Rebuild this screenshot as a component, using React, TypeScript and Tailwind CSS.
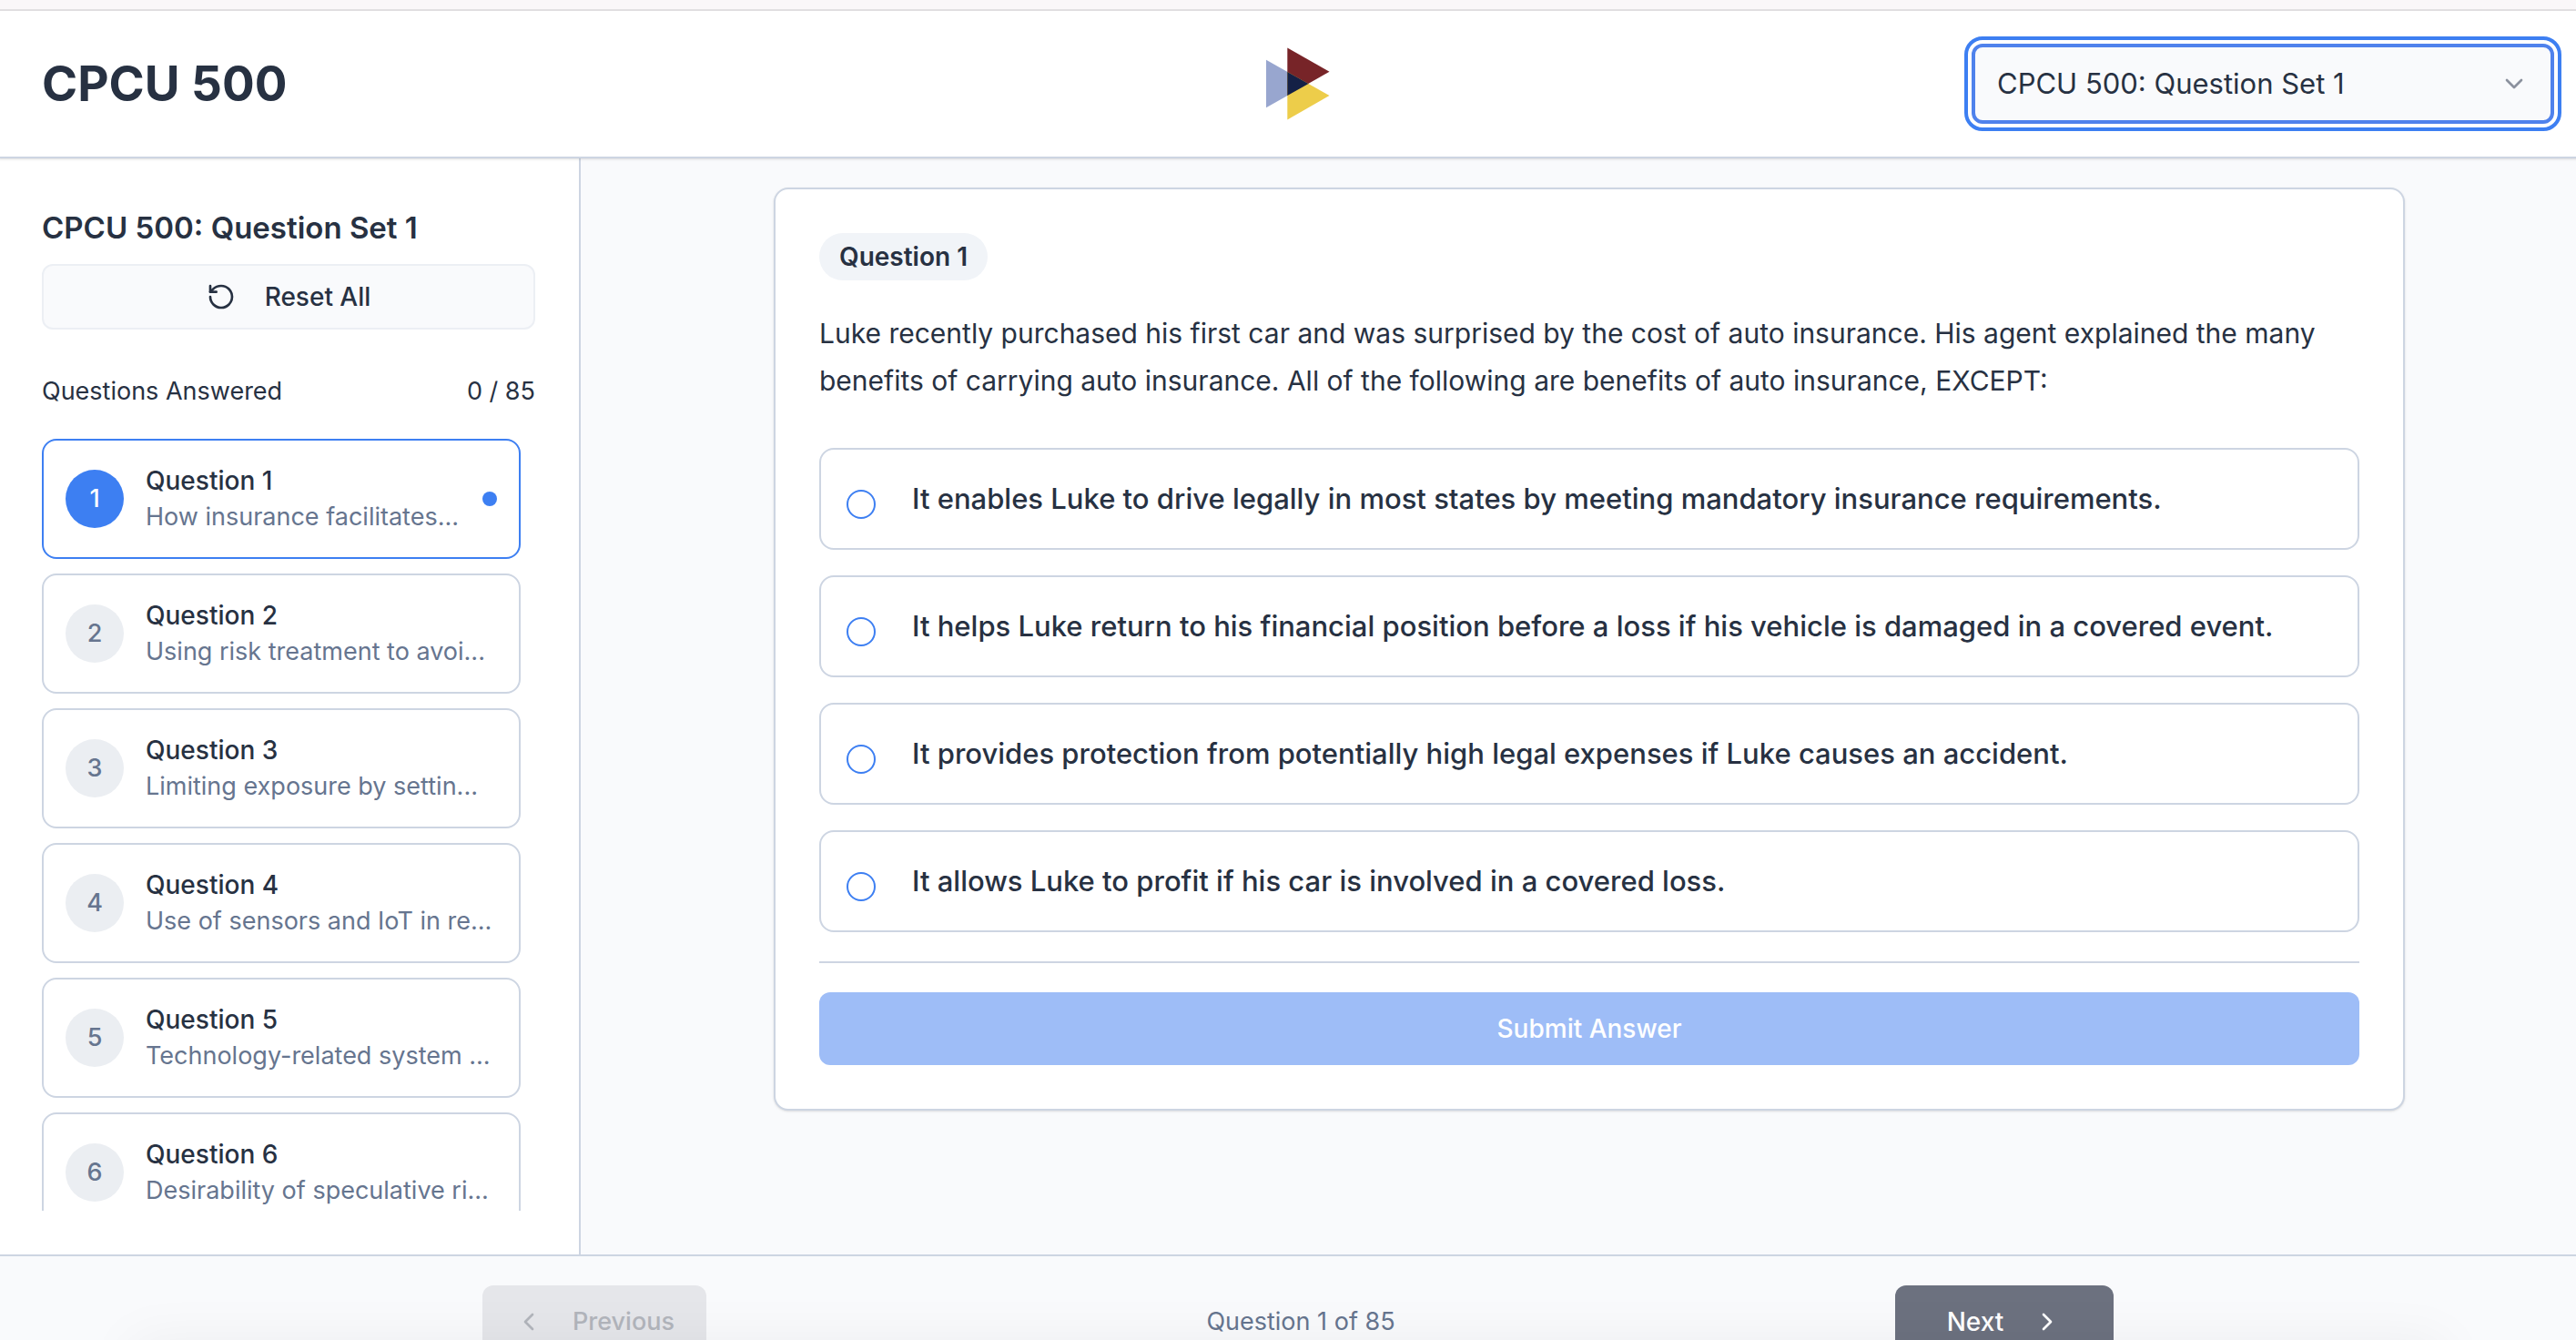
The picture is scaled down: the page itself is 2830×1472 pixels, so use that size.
import React, { useState } from "react";
import { ChevronDown, ChevronLeft, ChevronRight, RotateCcw } from "lucide-react";

const questions = [
  "How insurance facilitates...",
  "Using risk treatment to avoi...",
  "Limiting exposure by settin...",
  "Use of sensors and IoT in re...",
  "Technology-related system ...",
  "Desirability of speculative ri...",
];

const answers = [
  "It enables Luke to drive legally in most states by meeting mandatory insurance requirements.",
  "It helps Luke return to his financial position before a loss if his vehicle is damaged in a covered event.",
  "It provides protection from potentially high legal expenses if Luke causes an accident.",
  "It allows Luke to profit if his car is involved in a covered loss.",
];

function Logo() {
  return (
    <svg width="70" height="80" viewBox="0 0 70 80" role="img" aria-label="Logo">
      <path d="M0 13.7 46.5 40 0 66.3Z" fill="#98a6cf" />
      <path d="M23.3 0.5 69.5 26.7 23.3 53Z" fill="#772428" />
      <path d="M23.3 27 69.5 53 23.3 79.5Z" fill="#edcd4a" />
      <path d="M23.3 27 46.5 40 23.3 53Z" fill="#142046" />
    </svg>
  );
}

function Header() {
  return (
    <header className="z-10 flex h-[162px] shrink-0 items-center border-b-2 border-[#cdd5e2] bg-white px-12 shadow-sm">
      <h1 className="flex-1 text-[53px] leading-[64px] font-bold">CPCU 500</h1>
      <Logo />
      <div className="flex flex-1 justify-end">
        <div className="relative w-[640px]">
          <select
            aria-label="Question set"
            className="h-[88px] w-full appearance-none rounded-[12px] border-4 border-[#4f82ec] bg-[#f9fafc] px-6 text-[31px] outline-4 outline-offset-4 outline-[#3d7ff2]"
          >
            <option>CPCU 500: Question Set 1</option>
          </select>
          <ChevronDown className="pointer-events-none absolute top-7 right-7 size-8 text-[#8b919e]" />
        </div>
      </div>
    </header>
  );
}

function Sidebar({ current, onSelect }: { current: number; onSelect: (i: number) => void }) {
  return (
    <aside className="flex w-[640px] shrink-0 flex-col border-r-2 border-[#cdd5e2] bg-white p-12">
      <h2 className="pt-1 text-[33px] leading-[48px] font-semibold">CPCU 500: Question Set 1</h2>
      <button className="mt-4 flex h-[72px] shrink-0 items-center justify-center gap-8 rounded-[12px] border-2 border-[#eceff4] bg-[#f9fafc] text-[28px] font-medium">
        <RotateCcw className="size-8" />
        Reset All
      </button>
      <div className="mt-12 flex justify-between text-[27px] leading-10">
        <span>Questions Answered</span>
        <span>0 / 85</span>
      </div>
      <ul className="mt-8 flex min-h-0 flex-1 flex-col gap-4 overflow-hidden pr-4">
        {questions.map((topic, i) => (
          <li key={topic} className="shrink-0">
            <button
              onClick={() => onSelect(i)}
              className={`flex h-[132px] w-full items-center gap-6 rounded-[16px] border-2 px-6 text-left text-[27px] leading-10 ${
                i === current ? "border-[#3d7ff2]" : "border-[#cdd5e2]"
              }`}
            >
              <span
                className={`flex size-16 shrink-0 items-center justify-center rounded-full font-medium ${
                  i === current ? "bg-[#3d7ff2] text-white" : "bg-[#ebeef2] text-[#66758f]"
                }`}
              >
                {i + 1}
              </span>
              <span className="min-w-0 flex-1 whitespace-nowrap">
                <span className="block text-[28px] leading-10 font-medium">Question {i + 1}</span>
                <span className="block text-[#66758f]">{topic}</span>
              </span>
              {i === current && <span className="size-4 shrink-0 rounded-full bg-[#3d7ff2]" />}
            </button>
          </li>
        ))}
      </ul>
    </aside>
  );
}

function QuestionCard({ number }: { number: number }) {
  return (
    <section className="mx-auto w-full max-w-[1792px] rounded-[16px] border-2 border-[#cdd5e2] bg-white p-12 shadow-sm">
      <span className="inline-flex h-[52px] items-center rounded-full bg-[#f1f4f8] px-[22px] align-top text-[28px] font-semibold">
        Question {number}
      </span>
      <p className="mt-8 text-[30px] leading-[52px]">
        Luke recently purchased his first car and was surprised by the cost of auto insurance. His agent explained the
        many benefits of carrying auto insurance. All of the following are benefits of auto insurance, EXCEPT:
      </p>
      <div role="radiogroup" aria-label="Answers" className="mt-12 flex flex-col gap-7">
        {answers.map((answer) => (
          <label
            key={answer}
            className="flex h-[112px] items-center gap-10 rounded-[16px] border-2 border-[#cdd5e2] px-7 text-[31px] font-medium"
          >
            <input
              type="radio"
              name="answer"
              className="mt-3 size-8 shrink-0 appearance-none rounded-full border-2 border-[#3d7ff2] checked:border-[10px]"
            />
            {answer}
          </label>
        ))}
      </div>
      <hr className="my-8 border-t-2 border-[#cdd5e2]" />
      <button disabled className="h-20 w-full rounded-[12px] bg-[#9ebdf7] text-[28px] font-medium text-white">
        Submit Answer
      </button>
    </section>
  );
}

function Footer({ current, onSelect }: { current: number; onSelect: (i: number) => void }) {
  return (
    <footer className="shrink-0 border-t-2 border-[#cdd5e2] py-8 text-[27px]">
      <div className="mx-auto flex max-w-[1792px] items-center justify-between">
        <button
          disabled={current === 0}
          onClick={() => onSelect(current - 1)}
          className="flex h-20 w-[246px] items-center justify-center gap-8 rounded-[12px] bg-[#e5e6ea] font-medium text-[#b2b5bc]"
        >
          <ChevronLeft className="size-8" />
          Previous
        </button>
        <span className="text-[#66758f]">Question {current + 1} of 85</span>
        <button
          onClick={() => onSelect(Math.min(current + 1, questions.length - 1))}
          className="flex h-20 w-[240px] items-center justify-center gap-8 rounded-[12px] bg-[#6c717f] text-[28px] font-medium text-white"
        >
          Next
          <ChevronRight className="size-8" />
        </button>
      </div>
    </footer>
  );
}

export default function App() {
  const [current, setCurrent] = useState(0);
  return (
    <div className="relative h-screen overflow-hidden bg-[#f9fafc] font-['Inter',sans-serif] text-[#273142]">
      <div className="-ml-0.5 flex h-[calc(100vh+52px)] w-[calc(100%+26px)] flex-col">
        <div className="h-3 shrink-0 border-b-2 border-[#e3e1e3] bg-[#faf7f9]" />
        <Header />
        <div className="flex min-h-0 flex-1">
          <Sidebar current={current} onSelect={setCurrent} />
          <main className="flex-1 pt-8">
            <QuestionCard number={current + 1} />
          </main>
        </div>
        <Footer current={current} onSelect={setCurrent} />
      </div>
      <div className="pointer-events-none absolute inset-x-36 top-full h-24 shadow-[0_0_60px_rgba(0,0,0,0.05)]" />
    </div>
  );
}
